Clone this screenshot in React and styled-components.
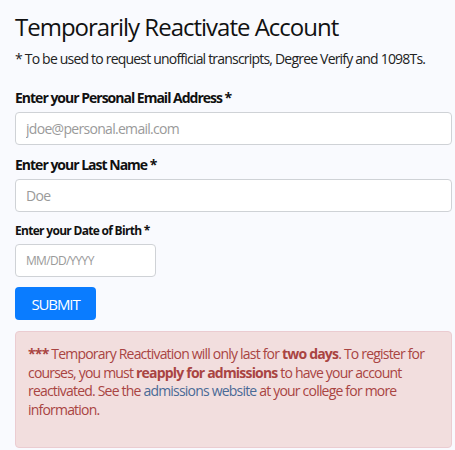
import styled, { createGlobalStyle } from "styled-components";

const GlobalStyle = createGlobalStyle`
  body {
    margin: 0;
    background: #f9fafe;
    font-family: "Open Sans", "Noto Sans", sans-serif;
    color: #111;
  }
`;

const Page = styled.main`
  padding: 11px 3px 0 15px;
  display: flex;
  flex-direction: column;
`;

const Title = styled.h1`
  margin: 0;
  font-size: 24px;
  font-weight: 400;
  line-height: 32px;
  letter-spacing: -1px;
  color: #111;
`;

const Note = styled.p`
  margin: 6px 0 0;
  font-size: 14px;
  line-height: 20px;
  letter-spacing: -0.8px;
  color: #222;
`;

const Form = styled.form`
  margin-top: 19px;
  display: flex;
  flex-direction: column;
`;

const Label = styled.label`
  font-size: ${({ $small }) => ($small ? "12px" : "14px")};
  font-weight: 700;
  line-height: ${({ $small }) => ($small ? "18px" : "20px")};
  letter-spacing: ${({ $small }) => ($small ? "-0.7px" : "-1px")};
  margin-bottom: 4px;
  color: #111;
`;

const Input = styled.input`
  box-sizing: border-box;
  width: ${({ $width }) => $width || "100%"};
  height: 33px;
  padding: 0 10px;
  border: 1px solid #cfd2d6;
  border-radius: 4px;
  background: #fff;
  font-family: inherit;
  font-size: ${({ $small }) => ($small ? "12px" : "14px")};
  letter-spacing: -0.7px;
  margin-bottom: 10px;
  &::placeholder {
    color: #9a9a9a;
  }
`;

const Submit = styled.button`
  align-self: flex-start;
  width: 81px;
  height: 33px;
  border: none;
  border-radius: 4px;
  background: #0a7cff;
  color: #fff;
  font-family: inherit;
  font-size: 15px;
  letter-spacing: -1.1px;
  padding: 0;
`;

const Alert = styled.div`
  margin-top: 11px;
  padding: 13px 12px 28px;
  background: #f2dede;
  border: 1px solid #ebccd1;
  border-radius: 4px;
  color: #a94442;
  font-size: 14px;
  line-height: 18.5px;
  letter-spacing: -0.8px;
`;

const Link = styled.a`
  color: #4a6a96;
  text-decoration: none;
`;

export default function App() {
  return (
    <>
      <GlobalStyle />
      <Page>
        <Title>Temporarily Reactivate Account</Title>
        <Note>* To be used to request unofficial transcripts, Degree Verify and 1098Ts.</Note>
        <Form onSubmit={(e) => e.preventDefault()}>
          <Label>Enter your Personal Email Address *</Label>
          <Input placeholder="jdoe@personal.email.com" />
          <Label>Enter your Last Name *</Label>
          <Input placeholder="Doe" />
          <Label $small>Enter your Date of Birth *</Label>
          <Input $width="141px" $small placeholder="MM/DD/YYYY" />
          <Submit type="submit">SUBMIT</Submit>
        </Form>
        <Alert>
          <b>***</b> Temporary Reactivation will only last for <b>two days</b>. To register for
          courses, you must <b>reapply for admissions</b> to have your account reactivated. See
          the <Link href="#">admissions website</Link> at your college for more information.
        </Alert>
      </Page>
    </>
  );
}
